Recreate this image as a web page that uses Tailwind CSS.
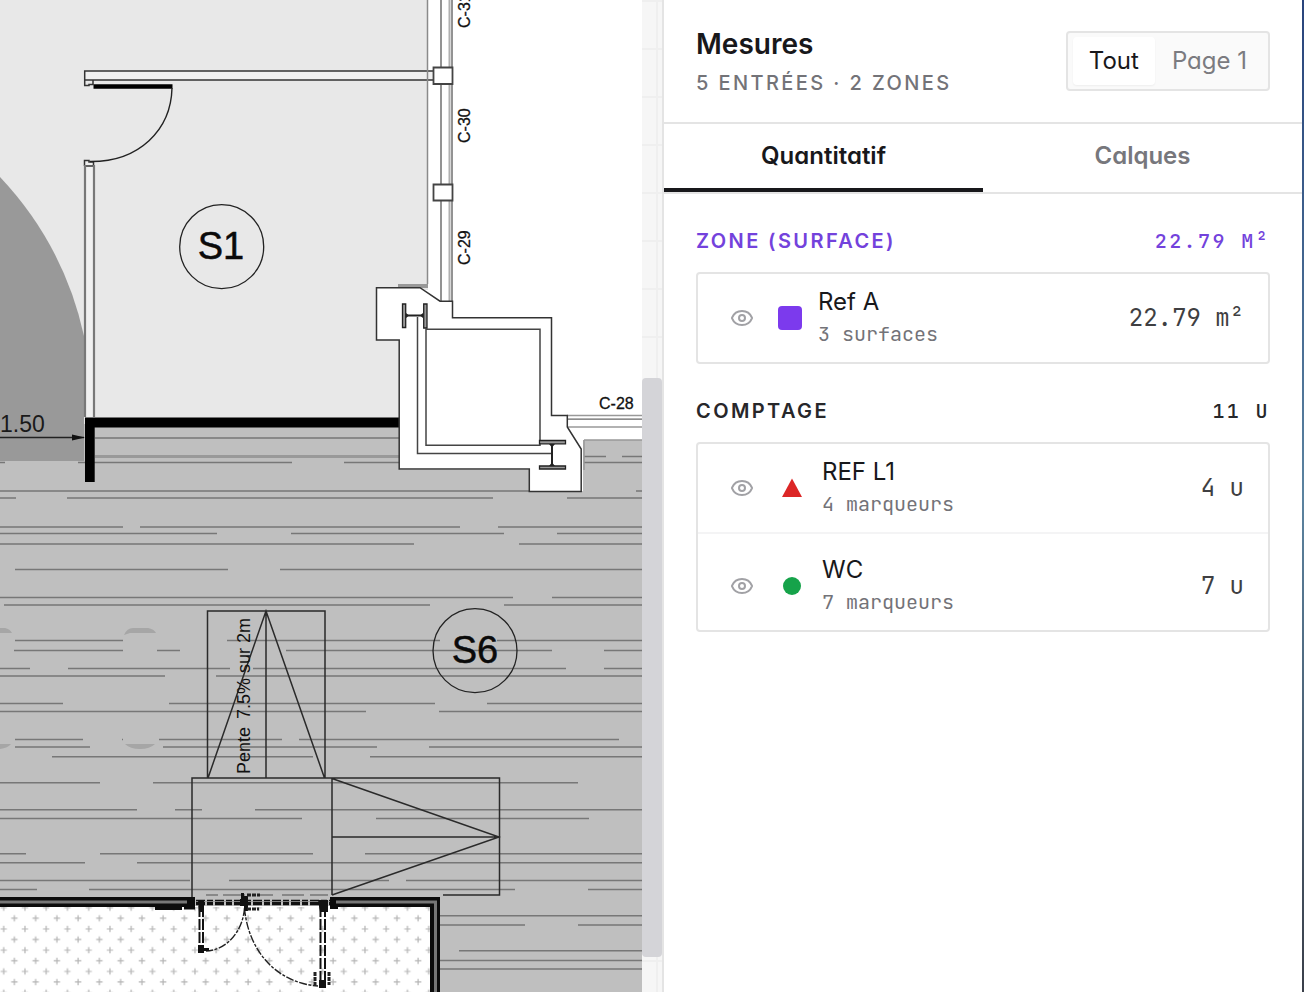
<!DOCTYPE html>
<html lang="fr">
  <head>
    <meta charset="UTF-8" />
    <meta name="viewport" content="width=device-width, initial-scale=1.0" />
    <script src="https://cdn.jsdelivr.net/npm/@tailwindcss/browser@4"></script>
    <title>Mesures</title>
  </head>
  <body class="flex h-screen overflow-hidden bg-white font-['Inter',sans-serif] text-[#18181b] [font-feature-settings:'cv11']">
    <!-- Plan -->
    <main class="min-w-0 flex-1">
      <svg
        class="block h-full w-full font-['Liberation_Sans',sans-serif]"
        viewBox="0 0 642 992"
        preserveAspectRatio="xMinYMin slice"
        fill="none"
        role="img"
        aria-label="Plan"
      >
        <defs>
          <pattern id="crosses" x="3.7" y="907.7" width="21.25" height="21.25" patternUnits="userSpaceOnUse">
            <path d="M7.5 10.6h6.4M10.7 7.4v6.4M0 0h3.2M18.05 0h3.2M0 21.25h3.2M18.05 21.25h3.2M0 0v3.2M0 18.05v3.2M21.25 0v3.2M21.25 18.05v3.2" stroke="#b4b4b4" stroke-width="1.2" />
          </pattern>
        </defs>

        <!-- Fonds -->
        <path d="M0 0H428V290H400V427H0Z" fill="#e8e8e8" />
        <path d="M0 424H400V470H530V491H583V440H642V992H0Z" fill="#bfbfbf" />
        <path d="M0 177A337 337 0 0 1 84 336V461H0Z" fill="#999" />

        <!-- Hachures -->
        <path
          d="M95 438H400M584 456.500H606M622 456.500H642M584 462.500H642M0 462.500H5M78 462.500H292M344 462.500H400
          M0 491H530M636 491H642M0 498H16M67 498H493M567 498H642
          M0 527H123M140 527H460M498 527H642M0 533.500H217M291 533.500H504M557 533.500H642M0 544H414M519 544H642
          M15 569.500H228M280 569.500H642M0 597.500H513M552 597.500H642M4 605H430M504 605H642
          M15 640.500H123M227 640.500H440M497 640.500H642M14 650.500H123M157 650.500H180M286 650.500H552M604 650.500H642
          M0 668.500H30M68 668.500H230M253 668.500H566M604 668.500H642M0 676H165M216 676H642
          M0 703.500H63M169 703.500H435M487 703.500H642M0 711.500H366M439 711.500H642
          M15 739.500H83M122 739.500H123M159 739.500H282M299 739.500H619M15 747H90M163 747H377M429 747H642
          M52 756.700H313M370 756.700H642M0 782.700H100M153 782.700H578M0 809.700H137M175 809.700H202M255 809.700H642
          M0 818.500H302M376 818.500H589M0 853.700H26M100 853.700H313M365 853.700H642M0 862.700H85M137 862.700H642
          M0 880.500H190M229 880.500H389M406 880.500H642M0 889.500H37M89 889.500H515M588 889.500H642
          M206 895H218M223 895H245M260 895H273M282 895H304M310 895H328
          M440 915.700H642M440 925H525M578 925H642M459 950.700H642M440 960.500H642M440 969H642"
          stroke="#777"
          stroke-width="1.500"
        />
        <path d="M95 456.500H400" stroke="#999" stroke-width="3" />
        <path d="M0 628H5Q10 629 12 633H0ZM124 635Q127 628 133 628H148Q154 629 156 633H130ZM0 744H11Q8 748 0 749ZM125 744H155Q150 749 140 749T125 744Z" fill="#a6a6a6" />

        <!-- Cloisons -->
        <path d="M85 71H433V80H85ZM84.500 161H93V417H84.500Z" fill="#f0f0f0" />
        <path d="M433 71H84.700V85.500H89V84.500H93V80M84.700 80H433M84.500 166V160.500H89V162H93.500V166H84.500" stroke="#333" stroke-width="1.5" />
        <path d="M85 165V417M94 165V417" stroke="#787878" stroke-width="2.2" />
        <path d="M93.500 86.500H172.500" stroke="#000" stroke-width="4.500" />
        <path d="M172 88C171 130 139 162 90 161.500" stroke="#222" stroke-width="1.400" />
        <path d="M85 417.500H400V427.500H94.700V482H85Z" fill="#000" />
        <path d="M0 437.500H84" stroke="#222" stroke-width="1.300" />
        <path d="M72 434.500L85 437.500L72 440.500Z" fill="#111" />

        <!-- Façade -->
        <path d="M427.500 0V284" stroke="#8a8a8a" stroke-width="1.500" />
        <path d="M441 0V301M452 0V301" stroke="#666" stroke-width="1.400" />
        <path d="M449.500 0V301" stroke="#b0b0b0" stroke-width="2" />
        <path d="M433.500 67.500H452.500V84H433.500ZM433.500 184.500H452.500V200.500H433.500Z" fill="#fff" stroke="#444" stroke-width="1.800" />
        <path d="M398 284H428V288H398Z" fill="#999" />
        <path d="M567 415.500H642M567 427H642M584 440H642M584 440V470" stroke="#999" stroke-width="1.500" />
        <path d="M567 419.200H642" stroke="#666" stroke-width="1.200" />

        <!-- Poteau -->
        <path d="M376.500 287.700H420L440 301.200H452.500V317.700H551.500V415.500H567.300V427L581.200 449V491.500H529.300V469H399.200V340H376.500Z" fill="#fff" stroke="#333" stroke-width="1.500" />
        <path d="M426 329.200H540V445.300H426ZM417.500 317V453.500H552" stroke="#444" stroke-width="1.500" />
        <path d="M402.500 304H405.700V327.500H402.500ZM423.700 304H427V328H423.700ZM539.500 440.500H565.500V443.800H539.500ZM539.500 466H565.500V469H539.500Z" fill="#999" stroke="#222" stroke-width="1.300" />
        <path d="M406 315.500H423M552 445V465" stroke="#222" stroke-width="2" />
        <path d="M406 313L409 315.500L406 318M423 313L420 315.500L423 318M549 444L552 447.500L555 444M549 466L552 462.500L555 466" fill="#222" />

        <!-- Rampes -->
        <path d="M207.500 611H325V778H207.500ZM266 611V778M208 778L266 611L324.500 778M332 778H192V897M332 778V895M332 778H499.500V895H443M332 778.500L499 837L332 895M332 837H499" stroke="#2a2a2a" stroke-width="1.500" />

        <!-- Local bas -->
        <path d="M0 906H440V992H0Z" fill="#fff" />
        <path d="M0 907H430V992H0Z" fill="url(#crosses)" />
        <path d="M0 897H195V907H0ZM330 897H440V992H430V907H330ZM155 906H182V910H155ZM184 898H195V909.500H184ZM330 898H338V909H330Z" fill="#0c0c0c" />
        <path d="M0 902H187M336 902H435.500V992" stroke="#777" stroke-width="3" />
        <path d="M196 902.500H330" stroke="#111" stroke-width="5.500" stroke-dasharray="9 2 6 2" />
        <path d="M196 901.500H330" stroke="#999" stroke-width="0.800" />
        <path d="M199.500 906V950M203 906V950M320.500 906V984M325 906V984" stroke="#111" stroke-width="2" stroke-dasharray="11 2" />
        <path d="M244.500 908C243 930 228 950 206 951M244.500 908C248 950 276 983 318 986" stroke="#222" stroke-width="1.400" stroke-dasharray="8 1.500 3 1.500" />
        <path d="M198 945H204V948H209V951H204V953H198ZM241 893H244V896H248V911H244V906H240V899H241ZM198 900H204V912H199ZM318 900H328V912H320ZM319 980H326V988H319Z" fill="#111" />
        <path d="M247 895H260M247 909H259M315 972V985M329 972V985" stroke="#222" stroke-width="3" stroke-dasharray="4 1" />

        <!-- Repères -->
        <circle cx="221.700" cy="246.700" r="42" stroke="#222" stroke-width="1.300" />
        <circle cx="475" cy="650.700" r="42" stroke="#222" stroke-width="1.300" />
        <g fill="#0a0a0a" text-anchor="middle" stroke="#0a0a0a" stroke-width="0.500" font-size="38">
          <text x="221" y="259">S1</text>
          <text x="475" y="663">S6</text>
        </g>
        <text x="0" y="432" font-size="23" fill="#1a1a1a">1.50</text>
        <g fill="#111" font-size="18">
          <text transform="translate(250 774) rotate(-90)">Pente</text>
          <text transform="translate(250 719) rotate(-90)">7.5% sur 2m</text>
        </g>
        <g fill="#111" stroke="#111" stroke-width="0.300" font-size="16">
          <text transform="translate(470 28) rotate(-90)">C-31</text>
          <text transform="translate(470 143) rotate(-90)">C-30</text>
          <text transform="translate(470 265) rotate(-90)">C-29</text>
          <text x="599" y="409">C-28</text>
        </g>
      </svg>
    </main>

    <!-- Barre de défilement -->
    <div class="relative w-5 shrink-0 bg-[#f6f6f6]">
      <svg class="block h-full w-full" aria-hidden="true">
        <defs>
          <pattern id="grid" width="48" height="48" patternUnits="userSpaceOnUse">
            <path d="M0 1H48M15 0V48" fill="none" stroke="#efefef" stroke-width="2" />
          </pattern>
        </defs>
        <rect width="100%" height="100%" fill="url(#grid)" />
      </svg>
      <div class="absolute inset-x-0 top-[38.1%] h-[58.4%] rounded-sm bg-[#d4d4d8]"></div>
    </div>

    <!-- Panneau des mesures -->
    <aside class="flex w-[640px] shrink-0 flex-col border-l-2 border-[#e4e4e4] bg-white">
      <header class="flex items-center justify-between border-b-2 border-[#e4e4e4] px-8 py-6">
        <div>
          <h1 class="mb-1 text-[28px] leading-10 font-semibold">Mesures</h1>
          <p class="text-xl leading-[30px] font-medium tracking-[0.12em] text-[#737378]">5 ENTRÉES · 2 ZONES</p>
        </div>
        <div class="flex gap-px rounded-sm border-2 border-[#e4e4e4] bg-[#fafafa] px-[5px] py-1 text-2xl leading-8">
          <button type="button" class="rounded-sm bg-white px-4 py-2 shadow-xs">Tout</button>
          <button type="button" class="px-4 py-2 text-[#7b7b80]">Page 1</button>
        </div>
      </header>

      <nav class="flex border-b-2 border-[#e4e4e4] text-2xl leading-8 font-semibold" role="tablist">
        <button type="button" role="tab" aria-selected="true" class="flex-1 border-b-4 border-[#18181b] py-4">Quantitatif</button>
        <button type="button" role="tab" aria-selected="false" class="flex-1 border-b-4 border-transparent py-4 text-[#77777c]">Calques</button>
      </nav>

      <div class="flex flex-col gap-8 px-8 pt-8">
        <section>
          <h2 class="mb-4 flex justify-between text-xl leading-[30px] font-semibold tracking-[0.12em] text-[#7342dc]">
            <span>ZONE (SURFACE)</span>
            <span class="font-['JetBrains_Mono','Liberation_Mono',monospace] font-medium">22.79 M²</span>
          </h2>
          <ul class="rounded-sm border-2 border-[#e4e4e4]">
            <li class="flex items-center px-6 py-3">
              <button type="button" class="mr-4 flex w-10 justify-center text-[#a1a1a5]" aria-label="Masquer Ref A">
                <svg class="size-6" viewBox="0 0 24 24" fill="none" stroke="currentColor" stroke-width="2" stroke-linecap="round" stroke-linejoin="round">
                  <path d="M2.062 12.348a1 1 0 0 1 0-.696 10.750 10.750 0 0 1 19.876 0 1 1 0 0 1 0 .696 10.750 10.750 0 0 1-19.876 0" />
                  <circle cx="12" cy="12" r="3" />
                </svg>
              </button>
              <span class="mr-4 size-6 rounded-sm bg-[#7c3aed]"></span>
              <div class="flex-1">
                <p class="text-2xl leading-8">Ref A</p>
                <p class="font-['JetBrains_Mono','Liberation_Mono',monospace] text-xl leading-8 text-[#737378]">3 surfaces</p>
              </div>
              <span class="font-['JetBrains_Mono','Liberation_Mono',monospace] text-2xl leading-8 text-[#3f3f42]">22.79 m²</span>
            </li>
          </ul>
        </section>

        <section>
          <h2 class="mb-4 flex justify-between text-xl leading-[30px] font-semibold tracking-[0.12em] text-[#27272a]">
            <span>COMPTAGE</span>
            <span class="font-['JetBrains_Mono','Liberation_Mono',monospace] font-medium">11 U</span>
          </h2>
          <ul class="rounded-sm border-2 border-[#e4e4e4]">
            <li class="mb-2 flex items-center border-b-2 border-[#f4f4f5] px-6 py-3">
              <button type="button" class="mr-4 flex w-10 justify-center text-[#a1a1a5]" aria-label="Masquer REF L1">
                <svg class="size-6" viewBox="0 0 24 24" fill="none" stroke="currentColor" stroke-width="2" stroke-linecap="round" stroke-linejoin="round">
                  <path d="M2.062 12.348a1 1 0 0 1 0-.696 10.750 10.750 0 0 1 19.876 0 1 1 0 0 1 0 .696 10.750 10.750 0 0 1-19.876 0" />
                  <circle cx="12" cy="12" r="3" />
                </svg>
              </button>
              <svg class="mr-4 size-7" viewBox="0 0 28 28" aria-hidden="true">
                <path d="M14 4.500L24 23H4Z" fill="#dc2626" />
              </svg>
              <div class="flex-1">
                <p class="text-2xl leading-8">REF L1</p>
                <p class="font-['JetBrains_Mono','Liberation_Mono',monospace] text-xl leading-8 text-[#737378]">4 marqueurs</p>
              </div>
              <span class="font-['JetBrains_Mono','Liberation_Mono',monospace] text-2xl leading-8 text-[#3f3f42]">4 u</span>
            </li>
            <li class="flex items-center px-6 py-3">
              <button type="button" class="mr-4 flex w-10 justify-center text-[#a1a1a5]" aria-label="Masquer WC">
                <svg class="size-6" viewBox="0 0 24 24" fill="none" stroke="currentColor" stroke-width="2" stroke-linecap="round" stroke-linejoin="round">
                  <path d="M2.062 12.348a1 1 0 0 1 0-.696 10.750 10.750 0 0 1 19.876 0 1 1 0 0 1 0 .696 10.750 10.750 0 0 1-19.876 0" />
                  <circle cx="12" cy="12" r="3" />
                </svg>
              </button>
              <svg class="mr-4 size-7" viewBox="0 0 28 28" aria-hidden="true">
                <circle cx="14" cy="14" r="9" fill="#16a34a" />
              </svg>
              <div class="flex-1">
                <p class="text-2xl leading-8">WC</p>
                <p class="font-['JetBrains_Mono','Liberation_Mono',monospace] text-xl leading-8 text-[#737378]">7 marqueurs</p>
              </div>
              <span class="font-['JetBrains_Mono','Liberation_Mono',monospace] text-2xl leading-8 text-[#3f3f42]">7 u</span>
            </li>
          </ul>
        </section>
      </div>
    </aside>
    <div class="w-0.5 shrink-0 bg-linear-to-b from-[#29447c] via-[#5b83a0] to-[#3a3f4a]"></div>
  </body>
</html>
